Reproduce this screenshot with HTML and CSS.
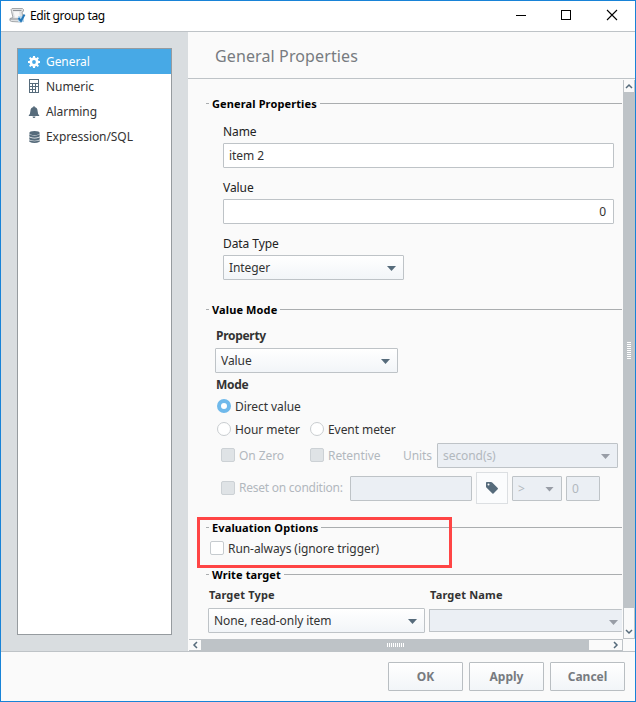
FILE: index.html
```html
<!DOCTYPE html>
<html lang="en">
<head>
<meta charset="utf-8">
<title>Edit group tag</title>
<link rel="stylesheet" href="styles.css">
</head>
<body>
<div class="window">
  <header class="titlebar">
    <svg class="app-icon" width="17" height="17" viewBox="0 0 17 17">
      <path d="M3 1.500Q1.500 2 2.500 4.500L4 10.500L1 11.500Q0 14 2.500 14.500L12 15Q14 14.500 14 11L13 5Q15 5 14.500 2.500L13.500 1.500Z" fill="#dfe1e3" stroke="#a3a7aa"/>
      <path d="M4 3.500H12.500M1 12H9.500Q11 12 11 14.500" fill="none" stroke="#8c9196"/>
      <path d="M4.500 4.500L6 10.500H11L10 4.500Z" fill="#f7f7f7"/>
      <path d="M9 9H15V15H9Z" fill="#b9d8ef"/>
      <path d="M9.500 11L12 14L15.500 7.500" fill="none" stroke="#2678b8" stroke-width="2"/>
    </svg>
    <h1 class="title">Edit group tag</h1>
    <svg class="controls" width="102" height="12" viewBox="0 0 102 12" fill="none" stroke="#000">
      <path d="M0 6.500H10"/>
      <rect x="45.500" y="1.500" width="9" height="9"/>
      <path d="M91 1L101 11M101 1L91 11" stroke-width="1.100"/>
    </svg>
  </header>
  <div class="body">
    <aside class="sidebar">
      <ul class="nav">
        <li class="nav-item selected">
          <svg width="12" height="12" viewBox="0 0 12 12"><g fill="currentColor"><circle cx="6" cy="6" r="4.500"/><path d="M5 0H7L7.300 3H4.700ZM5 12H7L7.300 9H4.700ZM0 5V7L3 7.300V4.700ZM12 5V7L9 7.300V4.700Z"/><path d="M1 2.300L2.300 1L5 3.500L3.500 5ZM9.700 1L11 2.300L8.500 5L7 3.500ZM11 9.700L9.700 11L7 8.500L8.500 7ZM2.300 11L1 9.700L3.500 7L5 8.500Z"/></g><circle cx="6" cy="6" r="1.900" fill="#47a9e6"/></svg>
          <span>General</span>
        </li>
        <li class="nav-item">
          <svg class="calc" width="12" height="14" viewBox="0 0 12 14"><path d="M1 0H11V14H1Z" fill="currentColor"/><path d="M2 1H10V4H2ZM2 5H4V7H2ZM5 5H7V7H5ZM8 5H10V7H8ZM2 8H4V10H2ZM5 8H7V10H5ZM2 11H4V13H2ZM5 11H7V13H5ZM8 8H10V13H8Z" fill="#fff"/></svg>
          <span>Numeric</span>
        </li>
        <li class="nav-item">
          <svg width="12" height="12" viewBox="0 0 12 12" fill="currentColor"><path d="M5.500 0H6.500V1Q9.500 1.500 9.600 5Q9.700 8 11.200 9.300V10H.8V9.300Q2.300 8 2.400 5Q2.500 1.500 5.500 1ZM4.500 10.500H7.500Q7.300 12 6 12Q4.700 12 4.500 10.500Z"/></svg>
          <span>Alarming</span>
        </li>
        <li class="nav-item">
          <svg width="12" height="12" viewBox="0 0 12 12" fill="currentColor"><ellipse cx="6.500" cy="2" rx="5.200" ry="2"/><path d="M1.300 3.200Q6.500 5.800 11.700 3.200V5.500Q6.500 8 1.300 5.500ZM1.300 6.300Q6.500 8.700 11.700 6.300V8.400Q6.500 10.900 1.300 8.400ZM1.300 9.200Q6.500 11.500 11.700 9.200V10.800Q6.500 13.200 1.300 10.800Z"/></svg>
          <span>Expression/SQL</span>
        </li>
      </ul>
    </aside>
    <main class="main">
      <h2 class="heading">General Properties</h2>
      <div class="scroller">
        <div class="content">
          <h3 class="legend first">General Properties</h3>
          <div class="fields">
            <label class="label">Name</label>
            <div class="box">item 2</div>
            <label class="label">Value</label>
            <div class="box number">0</div>
            <label class="label">Data Type</label>
            <div class="box select">Integer<i class="arrow"></i></div>
          </div>

          <h3 class="legend value-mode">Value Mode</h3>
          <div class="mode">
            <strong class="strong property-label">Property</strong>
            <div class="box select property">Value<i class="arrow"></i></div>
            <strong class="strong mode-label">Mode</strong>
            <div class="row radio-row"><i class="radio on"></i><span>Direct value</span></div>
            <div class="row radio-row"><i class="radio"></i><span class="hour">Hour meter</span><i class="radio"></i><span>Event meter</span></div>
            <div class="row units-row disabled">
              <i class="check"></i><span class="zero">On Zero</span>
              <i class="check"></i><span class="retentive">Retentive</span>
              <span class="units">Units</span>
              <div class="box select seconds">second(s)<i class="arrow"></i></div>
            </div>
            <div class="row reset-row disabled">
              <i class="check"></i><span class="reset">Reset on condition:</span>
              <div class="box condition"></div>
              <div class="tag-button">
                <svg width="12" height="12" viewBox="0 0 12 12"><path d="M0 .8Q0 0 .8 0H5Q5.700 0 6.200 .5L11.700 6Q12.300 6.600 11.700 7.200L7.500 11.500Q7 12 6.400 11.500L.6 5.800Q0 5.200 0 4.500Z" fill="#566b7b"/><circle cx="2.500" cy="2.500" r="1" fill="#fff"/></svg>
              </div>
              <div class="box select operator">&gt;<i class="arrow"></i></div>
              <div class="box zero-value">0</div>
            </div>
          </div>

          <h3 class="legend evaluation">Evaluation Options</h3>
          <div class="row run-row"><i class="check"></i><span>Run-always (ignore trigger)</span></div>

          <h3 class="legend write">Write target</h3>
          <div class="targets">
            <strong class="strong small">Target Type</strong>
            <strong class="strong small">Target Name</strong>
            <div class="box select">None, read-only item<i class="arrow"></i></div>
            <div class="box select target-name disabled"><i class="arrow"></i></div>
          </div>
          <div class="highlight"></div>
        </div>
        <div class="vbar">
          <svg width="10" height="12" viewBox="0 0 10 12"><path d="M2 8L5 5L8 8"/></svg>
          <div class="thumb"><i class="grip"></i></div>
          <svg class="down" width="10" height="30" viewBox="0 0 10 30"><path d="M2 22L5 25L8 22"/></svg>
        </div>
        <div class="hbar">
          <svg width="12" height="10" viewBox="0 0 12 10"><path d="M8 2L5 5L8 8"/></svg>
          <div class="thumb"><i class="grip"></i></div>
          <svg width="33" height="10" viewBox="0 0 33 10"><path d="M25 2L28 5L25 8"/></svg>
        </div>
        <div class="corner"></div>
      </div>
    </main>
  </div>
  <footer class="footer">
    <button class="button">OK</button>
    <button class="button">Apply</button>
    <button class="button">Cancel</button>
  </footer>
</div>
</body>
</html>
```

FILE: styles.css
```css
* { box-sizing: border-box; }
body { margin: 0; font: 12px/18px "Noto Sans", sans-serif; color: #333; letter-spacing: -.07px; }
h1, h2, h3, ul { margin: 0; padding: 0; font-weight: normal; }
i { font-style: normal; }
svg { flex: none; }

.window {
  width: 636px; height: 702px; border: 1px solid #1883d7;
  display: flex; flex-direction: column; background: #fafafa; overflow: hidden;
}
.titlebar {
  height: 31px; flex: none; display: flex; align-items: center;
  padding: 0 17px 0 8px; background: #fff; border-bottom: 1px solid #bec3c7;
}
.title { font-size: 12px; color: #000; margin-left: 4px; flex: 1; letter-spacing: -.4px; }
.app-icon { margin-top: -1px; }
.controls { margin-top: -2px; }

.body { height: 620px; flex: none; display: flex; border-bottom: 1px solid #bec3c7; }
.sidebar { width: 187px; background: #d9dde0; padding: 16px; }
.nav { height: 587px; border: 1px solid #969b9f; background: #fff; list-style: none; width: 155px; }
.nav-item { height: 25px; display: flex; align-items: center; gap: 6px; padding-left: 10px; color: #566b7b; }
.nav-item span { color: #333; }
.nav-item.selected { background: #47a9e6; color: #fff; }
.nav-item.selected span { color: #fff; }
.calc { margin-top: -1px; }

.main { width: 447px; display: flex; flex-direction: column; }
.heading { height: 47px; flex: none; border-bottom: 1px solid #bec3c7; font-size: 16px; line-height: 48px; padding-left: 27px; color: #777b80; letter-spacing: .12px; }
.scroller { flex: 1; display: grid; grid-template-columns: 435px 12px; grid-template-rows: 560px 12px; }
.content { position: relative; overflow: hidden; display: flex; flex-direction: column; margin-right: 1px; }

.legend {
  height: 18px; flex: none; display: flex; gap: 3px; padding-left: 18px; letter-spacing: .12px;
  font-size: 11px; font-weight: bold; line-height: 18px; color: #000; white-space: nowrap;
}
.legend::before, .legend::after { content: ""; height: 1px; margin-top: 8px; background: #aaadaf; }
.legend::before { width: 3px; }
.legend::after { flex: 1; }
.legend.first { margin-top: 16px; }
.legend.value-mode { margin-top: 21px; }
.legend.evaluation { margin-top: 15px; }
.legend.write { margin-top: 7px; }

.box {
  height: 25px; flex: none; border: 1px solid #bec3c7; background: #fff; border-radius: 1px;
  padding: 0 6px 0 5px; line-height: 24px; white-space: nowrap;
}
.number { text-align: right; padding-right: 7px; }
.select { display: flex; justify-content: space-between; padding-right: 7px; background: linear-gradient(#fff, #f2f5f8); }
.arrow { width: 9px; height: 5px; margin-top: 10px; background: #566b7b; clip-path: polygon(0 0, 100% 0, 50% 100%); margin-left: auto; }
.disabled .box, .disabled.box { background: #ebeff4; }
.disabled { color: #b2b8be; }
.disabled .arrow { background: #989da6; }

.fields { margin: 10px 8px 0 35px; display: flex; flex-direction: column; color: #333; }
.label { height: 20px; color: #222; }
.fields .box + .label { margin-top: 11px; }
.fields .select { width: 181px; }

.mode { margin: 9px 0 0 27px; display: flex; flex-direction: column; }
.strong { display: block; font-size: 12px; color: #333; letter-spacing: -.3px; }
.property-label { height: 20px; line-height: 16px; padding-left: 1px; }
.property { width: 183px; }
.mode-label { margin-top: 3px; height: 20px; padding-left: 1px; }
.row { display: flex; align-items: center; white-space: nowrap; }
.radio-row { height: 21px; padding-left: 2px; }
.radio-row + .radio-row { margin-top: 2px; }
.radio { width: 14px; height: 14px; flex: none; border: 1px solid #c9cdd0; border-radius: 50%; background: #fff; margin: -1px 4px 0 0; }
.radio.on { border: 4px solid #6fb9eb; }
.hour { width: 75px; }
.check { width: 14px; height: 14px; flex: none; border: 1px solid #c6cbcf; border-radius: 2px; background: #fff; margin: -1px 4px 0 0; }
.disabled .check { background: #dfe3e6; border-color: #ccd1d5; }
.units-row { height: 25px; margin-top: 3px; padding-left: 6px; }
.zero { width: 71px; }
.retentive { width: 75px; }
.units { width: 34px; }
.seconds { width: 181px; }
.reset-row { height: 32px; margin-top: 4px; padding-left: 6px; }
.reset-row .check { margin-top: 0; }
.reset { width: 111px; letter-spacing: -.24px; }
.condition { width: 122px; }
.tag-button { width: 32px; height: 32px; margin: 0 4px; border: 1px solid #dcdfe2; background: #fbfcfd; display: flex; align-items: center; justify-content: center; }
.operator { width: 50px; }
.zero-value { width: 34px; margin-left: 4px; }
.run-row { height: 21px; margin-top: 1px; padding-left: 22px; }

.targets { margin: 2px 0 0 20px; display: grid; grid-template-columns: 217px 193px; column-gap: 4px; grid-template-rows: 22px 25px; }
.small { font-size: 11px; letter-spacing: .17px; line-height: 17px; padding-left: 1px; }
.target-name { height: 23px; margin-top: 1px; border-right: 0; padding-right: 4px; }
.highlight { position: absolute; left: 9px; top: 438px; width: 255px; height: 51px; border: 3px solid #ff4545; }

.vbar { padding: 0 1px 1px; margin-top: 1px; display: flex; flex-direction: column; background: #bec3c7; }
.vbar svg, .hbar svg { background: #fafafa; fill: none; stroke: #566b7b; stroke-width: 1.500; }
.thumb { background: #bec3c7; flex: 1; display: flex; align-items: center; justify-content: center; }
.vbar .grip { width: 4px; height: 17px; background: repeating-linear-gradient(#fff 0 1px, transparent 1px 2px); }
.hbar { display: flex; padding: 1px 1px 1px 0; margin-left: 1px; background: #bec3c7; }
.hbar .grip { height: 4px; width: 17px; background: repeating-linear-gradient(90deg, #fff 0 1px, transparent 1px 2px); }
.corner { background: #fafafa; }

.footer { display: flex; gap: 6px; justify-content: flex-end; padding: 10px 10px 0 0; }
.button { width: 75px; height: 29px; padding: 0; border: 1px solid #b9bec2; border-radius: 1px; background: linear-gradient(#fff, #f2f5f8); font: bold 12px/26px "Noto Sans", sans-serif; color: #777b80; }
```
